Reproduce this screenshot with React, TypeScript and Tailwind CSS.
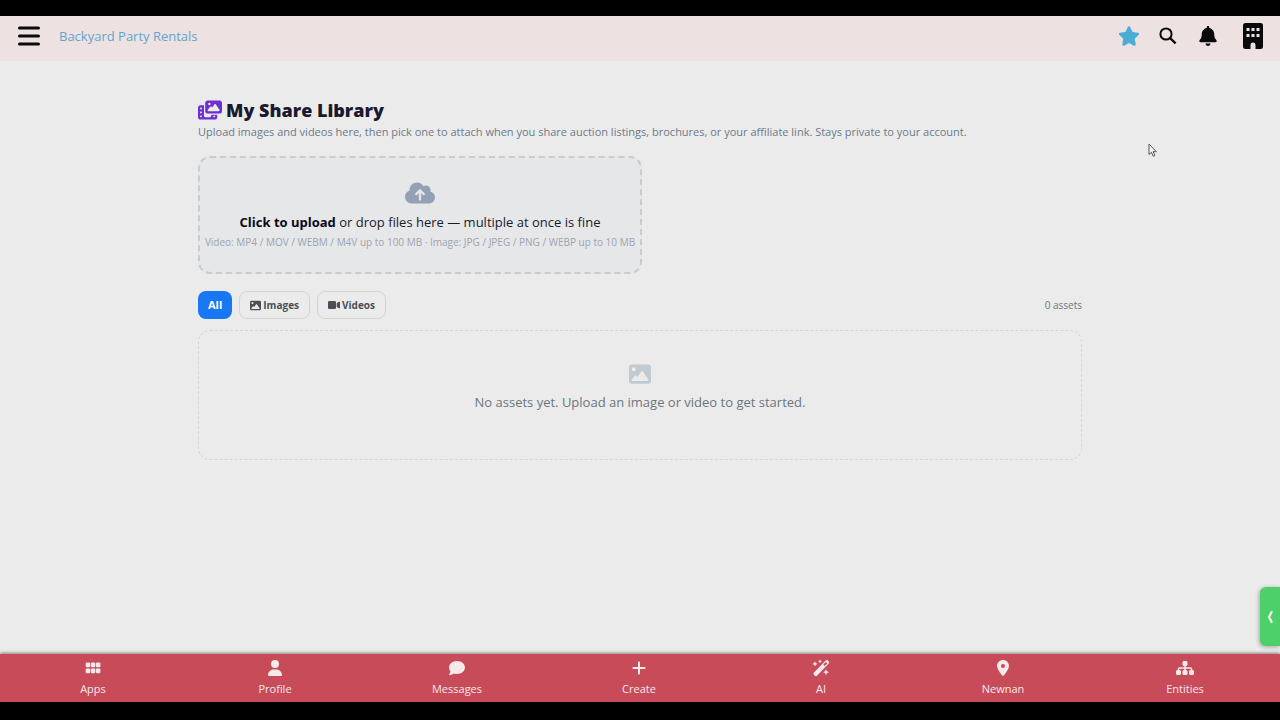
import type { ComponentType } from "react";
import {
  FaBell,
  FaCloudArrowUp,
  FaComment,
  FaImage,
  FaLocationDot,
  FaPhotoFilm,
  FaPlus,
  FaSitemap,
  FaStar,
  FaUser,
  FaVideo,
} from "react-icons/fa6";

type IconType = ComponentType<{ className?: string }>;

function AppsIcon({ className }: { className?: string }) {
  return (
    <svg viewBox="0 0 16 16" className={className} fill="currentColor" aria-hidden="true">
      {[0.7, 5.8, 10.9].map((x) => (
        <g key={x}>
          <rect x={x} y="2.5" width="4.5" height="4.8" rx="1.2" />
          <rect x={x} y="8.4" width="4.5" height="4.8" rx="1.2" />
        </g>
      ))}
    </svg>
  );
}

function WandIcon({ className }: { className?: string }) {
  return (
    <svg viewBox="0 0 18 18" className={className} fill="currentColor" aria-hidden="true">
      <path
        fillRule="evenodd"
        d="M2 13.6 13.4 1.7a1.9 1.9 0 0 1 2.7 0l.4.4a1.9 1.9 0 0 1 0 2.7L5.2 16.6a1.9 1.9 0 0 1-2.7 0l-.5-.5a1.8 1.8 0 0 1 0-2.5zM11.3 5.6l1.4 1.4 2.5-2.6-1.3-1.3z"
      />
      <path d="M3 2.2l.8 1.900 1.900.8-1.900.8L3 7.600l-.8-1.900L.3 4.900l1.900-.8zM8 .3l.6 1.500 1.500.6-1.500.6L8 4.500 7.400 3l-1.500-.6 1.500-.6zM14 10.200l.9 2.100 2.100.9-2.100.9-.9 2.100-.9-2.100-2.100-.9 2.100-.9z" />
    </svg>
  );
}

function BuildingIcon({ className }: { className?: string }) {
  return (
    <svg viewBox="0 0 20 26" className={className} fill="currentColor" aria-hidden="true">
      <path
        fillRule="evenodd"
        d="M2.5 0h15A2.5 2.5 0 0 1 20 2.5v21a2.5 2.5 0 0 1-2.5 2.5H12.5v-4a2.5 2.5 0 0 0-5 0v4H2.5A2.5 2.5 0 0 1 0 23.5v-21A2.5 2.5 0 0 1 2.5 0zM3.5 5v3h3V5zM8.5 5v3h3V5zM13.5 5v3h3V5zM3.5 11v3h3v-3zM8.5 11v3h3v-3zM13.5 11v3h3v-3z"
      />
    </svg>
  );
}

const tabs: { label: string; Icon: IconType; size: string }[] = [
  { label: "Apps", Icon: AppsIcon, size: "size-4" },
  { label: "Profile", Icon: FaUser, size: "size-4" },
  { label: "Messages", Icon: FaComment, size: "size-4" },
  { label: "Create", Icon: FaPlus, size: "size-4" },
  { label: "AI", Icon: WandIcon, size: "size-[18px]" },
  { label: "Newnan", Icon: FaLocationDot, size: "size-4" },
  { label: "Entities", Icon: FaSitemap, size: "size-[18px]" },
];

function MenuIcon() {
  return (
    <svg viewBox="0 0 22 20" className="h-5 w-[22px]" stroke="currentColor" strokeWidth="3" strokeLinecap="round" aria-hidden="true">
      <path d="M1.5 2h19M1.5 10h19M1.5 18h19" />
    </svg>
  );
}

function SearchIcon() {
  return (
    <svg viewBox="0 0 18 18" className="size-[18px]" fill="none" stroke="currentColor" strokeWidth="2" aria-hidden="true">
      <circle cx="7" cy="7" r="5.6" />
      <path d="M11 11l5.6 5.4" strokeWidth="2.4" />
    </svg>
  );
}

function Cursor() {
  return (
    <svg viewBox="0 0 10 15" className="pointer-events-none absolute top-[127px] left-[1148px] h-[15px] w-2.5" fill="#f4f4f4" stroke="#555" strokeWidth="1" aria-hidden="true">
      <path d="M1 1v10.5l2.4-2.2 1.8 4 1.7-.8-1.8-3.8h3.2z" />
    </svg>
  );
}

export default function App() {
  return (
    <div className="relative flex min-h-screen flex-col overflow-hidden border-t-16 border-b-18 border-black bg-[#ebebeb] font-['Open_Sans','Noto_Sans',sans-serif] text-[#1a1a2e]">
      <header className="flex h-[45px] items-center bg-[#ede1e2] pr-[17px] pb-[5px] pl-[18px] text-[#0a0a0a]">
        <button type="button" aria-label="Menu">
          <MenuIcon />
        </button>
        <a href="#" className="ml-[19px] text-[13px] leading-5 text-[#62a5cc]">
          Backyard Party Rentals
        </a>
        <nav aria-label="Account" className="ml-auto flex items-center">
          <a href="#favorites" aria-label="Favorites" className="text-[#4bacd6]">
            <FaStar className="size-[22px]" />
          </a>
          <button type="button" aria-label="Search" className="ml-[19px]">
            <SearchIcon />
          </button>
          <button type="button" aria-label="Notifications" className="ml-[21px]">
            <FaBell className="size-5" />
          </button>
          <a href="#entity" aria-label="Business" className="ml-[25px]">
            <BuildingIcon className="h-[26px] w-5" />
          </a>
        </nav>
      </header>

      <main className="mx-auto flex w-full max-w-[884px] flex-1 flex-col pt-[37px]">
        <h1 className="flex items-center gap-1 text-[18px] leading-6 font-extrabold">
          <FaPhotoFilm className="size-6 text-[#6f2fd0]" />
          My Share Library
        </h1>
        <p className="text-[11px] leading-5 text-[#6c7a89]">
          Upload images and videos here, then pick one to attach when you share auction listings, brochures, or your affiliate link. Stays private to your account.
        </p>

        <label className="mt-3.5 flex w-full max-w-[444px] cursor-pointer flex-col items-center rounded-xl border-2 border-dashed border-[#c8ccd0] bg-[#e6e7e9] pt-5 pb-5">
          <input type="file" multiple className="sr-only" />
          <FaCloudArrowUp className="size-[30px] text-[#94a0b4]" />
          <span className="mt-1 text-[13px] leading-5">
            <strong className="font-bold text-[#0a0a14]">Click to upload</strong> or drop files here — multiple at once is fine
          </span>
          <span className="text-[10px] leading-5 text-[#9ba4b0]">
            Video: MP4 / MOV / WEBM / M4V up to 100 MB · Image: JPG / JPEG / PNG / WEBP up to 10 MB
          </span>
        </label>

        <div className="mt-[17px] flex items-center gap-[7px] text-[10px] leading-4 font-bold text-[#495057]">
          <button type="button" className="h-7 rounded-lg bg-[#1877f2] px-2.5 text-[11px] text-white">
            All
          </button>
          <button type="button" className="flex h-7 items-center gap-0.5 rounded-lg border border-[#d0d5da] px-2.5">
            <FaImage className="size-[11px]" />
            Images
          </button>
          <button type="button" className="flex h-7 items-center gap-0.5 rounded-lg border border-[#d0d5da] px-2.5">
            <FaVideo className="size-3" />
            Videos
          </button>
          <span className="ml-auto font-normal text-[#6c757d]">0 assets</span>
        </div>

        <section className="mt-[11px] flex h-[130px] flex-col items-center rounded-xl border border-dashed border-[#d3d6d9] pt-8">
          <FaImage className="size-[22px] text-[#c2cad1]" />
          <p className="mt-[7px] text-[13px] leading-5 text-[#6c757d]">No assets yet. Upload an image or video to get started.</p>
        </section>
      </main>

      <button type="button" aria-label="Open panel" className="absolute right-0 bottom-[38px] mb-[18px] flex h-[59px] w-5 items-center justify-center rounded-l-md bg-[#4cd16a] text-[#f2fbe8] shadow-[-1px_1px_4px_rgba(0,0,0,0.3)]">
        <svg viewBox="0 0 6 14" className="h-3.5 w-1.5" fill="none" stroke="currentColor" strokeWidth="2.2" aria-hidden="true">
          <path d="M5 1.2L2 7l3 5.8" />
        </svg>
      </button>

      <footer className="bg-[#c84b5a] shadow-[0_-1px_3px_rgba(0,0,0,0.45)]">
        <nav aria-label="Main" className="grid h-12 grid-cols-7 pt-1.5 pr-1 pl-0.5 text-[11px] leading-5 text-[#f5e9ea]">
          {tabs.map(({ label, Icon, size }) => (
            <a key={label} href={`#${label.toLowerCase()}`} className="flex flex-col items-center">
              <span className="flex h-4 items-center">
                <Icon className={size} />
              </span>
              <span className="mt-[3px]">{label}</span>
            </a>
          ))}
        </nav>
      </footer>
      <Cursor />
    </div>
  );
}
